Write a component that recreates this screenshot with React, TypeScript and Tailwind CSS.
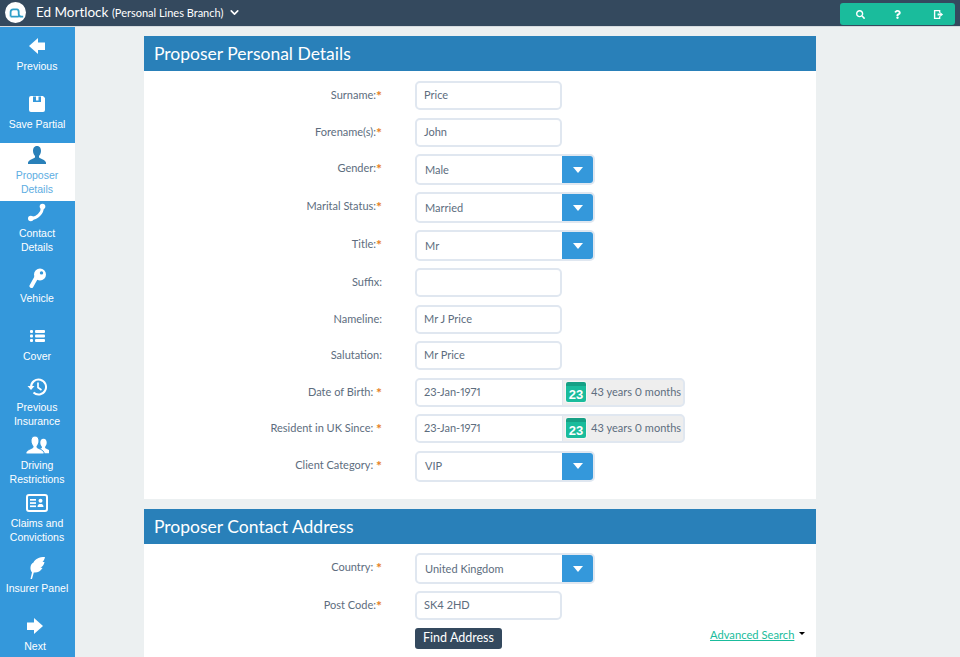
import React from 'react'
import { FaSearch, FaQuestion } from 'react-icons/fa'
import { ChevronDown } from 'lucide-react'

const ArrowLeft = () => (
    <svg viewBox="0 0 20 20" className="w-5 h-5 fill-current">
        <path d="M2 10 L11 2 V6.5 H18 V14 H11 V18 Z" />
    </svg>
)

const ArrowRight = () => (
    <svg viewBox="0 0 20 20" className="w-5 h-5 fill-current">
        <path d="M18 10 L9 2 V6.5 H2 V14 H9 V18 Z" />
    </svg>
)

const Floppy = () => (
    <svg viewBox="0 0 20 20" className="w-5 h-5 fill-current">
        <path d="M4 2 H16 L18 4 V16 Q18 18 16 18 H4 Q2 18 2 16 V4 Q2 2 4 2 Z M6 2.5 V8 H14 V2.5 H11.5 V6.5 H9 V2.5 Z" fillRule="evenodd" />
    </svg>
)

const personPath = 'M10 1 C7 1 6 3.5 6 6 C6 8.5 7.5 10.5 8 11 V12.5 C6 14 2 14.5 1 17.5 V19 H19 V17.5 C18 14.5 14 14 12 12.5 V11 C12.5 10.5 14 8.5 14 6 C14 3.5 13 1 10 1 Z'

const UserIcon = () => (
    <svg viewBox="0 0 20 20" className="w-5 h-5 fill-current">
        <path d={personPath} />
    </svg>
)

const UsersIcon = () => (
    <svg viewBox="0 0 24 20" className="w-[24px] h-5 fill-current">
        <path d={personPath} transform="translate(10.5 3) scale(0.8)" />
        <path d={personPath} stroke="#3498db" strokeWidth="1" />
    </svg>
)

const PhoneIcon = () => (
    <svg viewBox="0 0 20 20" className="w-5 h-5 fill-current">
        <path d="M15.5 4 C15.5 10 10 15.5 4 15.5" fill="none" stroke="currentColor" strokeWidth="3" />
        <circle cx="15.5" cy="3.5" r="2.8" />
        <circle cx="3.8" cy="15.5" r="2.8" />
    </svg>
)

const KeyIcon = () => (
    <svg viewBox="0 0 20 20" className="w-5 h-5 fill-current">
        <path d="M13 0.5 A6 6 0 1 1 13 12.5 A6 6 0 1 1 13 0.5 Z M14.5 3.2 A1.7 1.7 0 1 0 14.5 6.6 A1.7 1.7 0 1 0 14.5 3.2 Z" fillRule="evenodd" />
        <path d="M9.5 9 L4.5 18" fill="none" stroke="currentColor" strokeWidth="4" strokeLinecap="round" />
    </svg>
)

const ListIcon = () => (
    <svg viewBox="0 0 20 20" className="w-5 h-5 fill-current">
        <rect x="3" y="4" width="3" height="3" rx="1" />
        <rect x="8" y="4" width="10" height="3" rx="1" />
        <rect x="3" y="8.5" width="3" height="3" rx="1" />
        <rect x="8" y="8.5" width="10" height="3" rx="1" />
        <rect x="3" y="13" width="3" height="3" rx="1" />
        <rect x="8" y="13" width="10" height="3" rx="1" />
    </svg>
)

const HistoryIcon = () => (
    <svg viewBox="0 0 20 20" className="w-5 h-5 fill-current">
        <path d="M4 10 A7.5 7.5 0 1 1 6.5 15.6" fill="none" stroke="currentColor" strokeWidth="2" />
        <path d="M0.5 9 H7.5 L4 13 Z" />
        <path d="M11 5.5 V10.5 L14.5 13" fill="none" stroke="currentColor" strokeWidth="1.7" />
    </svg>
)

const CardIcon = () => (
    <svg viewBox="0 0 22 18" className="w-[22px] h-[18px] fill-current">
        <rect x="1" y="1" width="20" height="16" rx="2" fill="none" stroke="currentColor" strokeWidth="2" />
        <rect x="4" y="5" width="6" height="1.7" />
        <rect x="4" y="8.2" width="6" height="1.7" />
        <rect x="4" y="11.4" width="6" height="1.7" />
        <circle cx="14.5" cy="6.7" r="2" />
        <path d="M11.5 13 C11.5 10.5 13 10 14.5 10 C16 10 17.5 10.5 17.5 13 Z" />
    </svg>
)

const FeatherIcon = () => (
    <svg viewBox="0 0 20 24" className="w-5 h-6 fill-current">
        <path d="M3.5 23 L5 16.5 C2.5 13.5 3 8 6.5 6.5 C8 3 12 1 18 1 C17.5 3.5 16.5 5 15.5 6 L17.5 6 C17 9 15.5 10.5 13.5 11.5 L15.5 12 C13.5 15.5 10 17 6.8 16.5 L5 23 Z" />
    </svg>
)

const navItems = [
    { lines: ['Previous'], icon: <ArrowLeft /> },
    { lines: ['Save Partial'], icon: <Floppy /> },
    { lines: ['Proposer', 'Details'], icon: <UserIcon />, active: true },
    { lines: ['Contact', 'Details'], icon: <PhoneIcon /> },
    { lines: ['Vehicle'], icon: <KeyIcon /> },
    { lines: ['Cover'], icon: <ListIcon /> },
    { lines: ['Previous', 'Insurance'], icon: <HistoryIcon /> },
    { lines: ['Driving', 'Restrictions'], icon: <UsersIcon /> },
    { lines: ['Claims and', 'Convictions'], icon: <CardIcon /> },
    { lines: ['Insurer Panel'], icon: <FeatherIcon /> },
    { lines: ['Next'], icon: <ArrowRight />, shift: true },
]

const Row = ({ label, required, spaced, select, children }: { label: string; required?: boolean; spaced?: boolean; select?: boolean; children: React.ReactNode }) => (
    <div className={`flex items-start ${select ? 'h-[38px]' : 'h-[36.5px]'}`}>
        <div className="w-[238px] text-right text-[#5d6d7e] leading-[28px]">
            {label}
            {spaced && ' '}
            {(required || spaced) && <span className="text-[#e67e22] font-bold text-[14px] leading-none align-[-2px]">*</span>}
        </div>
        <div className="ml-[33px]">{children}</div>
    </div>
)

const TextRow = ({ label, value, tight }: { label: string; value: string; tight?: boolean }) => (
    <Row label={label} required={tight}>
        <div className="w-[147px] h-[29px] bg-white border-2 border-[#e0e7f0] rounded-[5px] px-[7px] flex items-center">{value}</div>
    </Row>
)

const SelectBox = ({ value }: { value: string }) => (
    <div className="w-[180px] h-[31px] bg-white border-2 border-[#e0e7f0] rounded-[5px] flex items-stretch">
        <div className="flex-1 pl-[8px] flex items-center pt-px">{value}</div>
        <div className="w-[31px] bg-[#3498db] rounded-r-[3px] flex items-center justify-center">
            <div className="w-0 h-0 border-x-[5px] border-x-transparent border-t-[6px] border-t-white" />
        </div>
    </div>
)

const DateBox = ({ value }: { value: string }) => (
    <div className="w-[270px] h-[29px] bg-[#eeeeee] border-2 border-[#e0e7f0] rounded-[5px] flex items-stretch">
        <div className="w-[146px] bg-white rounded-l-[3px] px-[7px] flex items-center border-r border-[#e0e7f0]">{value}</div>
        <div className="w-[20px] h-[20px] mt-[2px] ml-[3px] bg-[#1abc9c] rounded-[2px] text-white text-[13px] font-bold flex items-end justify-center leading-[15px] border-t-[4px] border-[#16a085] font-['Liberation_Sans',sans-serif] shadow-[0_0_0_1px_#ffffff80]">23</div>
        <div className="ml-[5px] flex items-center whitespace-nowrap text-[#5d6d7e]">43 years 0 months</div>
    </div>
)

export default function App() {
    return (
        <div className="w-[960px] h-[657px] overflow-hidden bg-[#ecf0f1] font-['Lato',sans-serif] text-[11px] [font-variant-numeric:proportional-nums] text-[#5d6d7e]">
            {/* Top bar */}
            <div className="h-[27px] bg-[#34495e] flex items-start pt-[2px] border-b border-white/80">
                <div className="ml-[5px] w-[21px] h-[21px] rounded-full bg-white flex items-center justify-center">
                    <svg viewBox="0 0 20 20" className="w-[18px] h-[18px] fill-none stroke-[#2f9fc9] stroke-2">
                        <path d="M4 14 V9 Q4 6 7 6 H11 Q13 6 13 9 V11 Q13 14 16 14 H18 M4 14 H13" />
                    </svg>
                </div>
                <div className="ml-[10px] mt-px text-white text-[13.5px] leading-[18px] whitespace-nowrap">Ed Mortlock <span className="text-[11px]">(Personal Lines Branch)</span></div>
                <ChevronDown className="ml-[5px] mt-[4px] w-[13px] h-[13px] text-white" strokeWidth={3} />
                <div className="ml-auto mr-[5px] mt-px w-[115px] h-[22px] bg-[#1abc9c] rounded-[3px] flex items-center text-white">
                    <FaSearch className="ml-[16px] w-[9px] h-[9px]" />
                    <FaQuestion className="ml-[29px] w-[7px] h-[9px]" />
                    <svg viewBox="0 0 12 12" className="ml-[32px] w-[11px] h-[11px] fill-current">
                        <path d="M1 1 H8 V4 H6.5 V2.5 H2.5 V9.5 H6.5 V8 H8 V11 H1 Z M5 5 H8 V3.5 L11 6 L8 8.5 V7 H5 Z" />
                    </svg>
                </div>
            </div>

            <div className="flex h-[630px]">
                {/* Side nav */}
                <div className="w-[75px] shrink-0 bg-[#3498db] font-['Liberation_Sans',sans-serif] text-[10.5px] leading-[14px]">
                    {navItems.map((item) => (
                        <div
                            key={item.lines.join(' ')}
                            className={`h-[58px] pb-[4px] flex flex-col items-center justify-center text-center ${item.active ? 'bg-white text-[#5dade2]' : 'text-white'} ${item.shift ? 'pr-[5px]' : 'pr-px'}`}
                        >
                            <div className={`h-5 mb-[3px] flex items-center justify-center ${item.active ? 'text-[#2980b9]' : ''}`}>{item.icon}</div>
                            {item.lines.map((l) => (
                                <div key={l}>{l}</div>
                            ))}
                        </div>
                    ))}
                </div>

                {/* Main */}
                <div className="flex-1 pl-[69px] pt-[9px]">
                    <div className="w-[672px] bg-white h-[463px]">
                        <div className="h-[35px] bg-[#2980b9] text-white text-[17.5px] pl-[10px] pt-px flex items-center">Proposer Personal Details</div>
                        <div className="pt-[10px]">
                            <TextRow label="Surname:" value="Price" tight />
                            <TextRow label="Forename(s):" value="John" tight />
                            <Row label="Gender:" required select><SelectBox value="Male" /></Row>
                            <Row label="Marital Status:" required select><SelectBox value="Married" /></Row>
                            <Row label="Title:" required select><SelectBox value="Mr" /></Row>
                            <TextRow label="Suffix:" value="" />
                            <TextRow label="Nameline:" value="Mr J Price" />
                            <TextRow label="Salutation:" value="Mr Price" />
                            <Row label="Date of Birth:" spaced><DateBox value="23-Jan-1971" /></Row>
                            <Row label="Resident in UK Since:" spaced><DateBox value="23-Jan-1971" /></Row>
                            <Row label="Client Category:" spaced select><SelectBox value="VIP" /></Row>
                        </div>
                    </div>
                    <div className="mt-[10px] w-[672px] bg-white h-[200px]">
                        <div className="h-[35px] bg-[#2980b9] text-white text-[17.5px] pl-[10px] pt-px flex items-center">Proposer Contact Address</div>
                        <div className="pt-[9px]">
                            <Row label="Country:" spaced select><SelectBox value="United Kingdom" /></Row>
                            <TextRow label="Post Code:" value="SK4 2HD" tight />
                            <div className="flex items-start">
                                <button className="ml-[271px] h-[21px] w-[87px] bg-[#34495e] rounded-[3px] text-white text-[12.5px]">Find Address</button>
                                <a className="ml-[208px] -mt-[1px] text-[11.2px] text-[#1abc9c] underline">Advanced Search</a>
                                <div className="ml-[5px] mt-[4px] w-0 h-0 border-x-[3px] border-x-transparent border-t-[3px] border-t-black" />
                            </div>
                        </div>
                    </div>
                </div>
            </div>
        </div>
    )
}
